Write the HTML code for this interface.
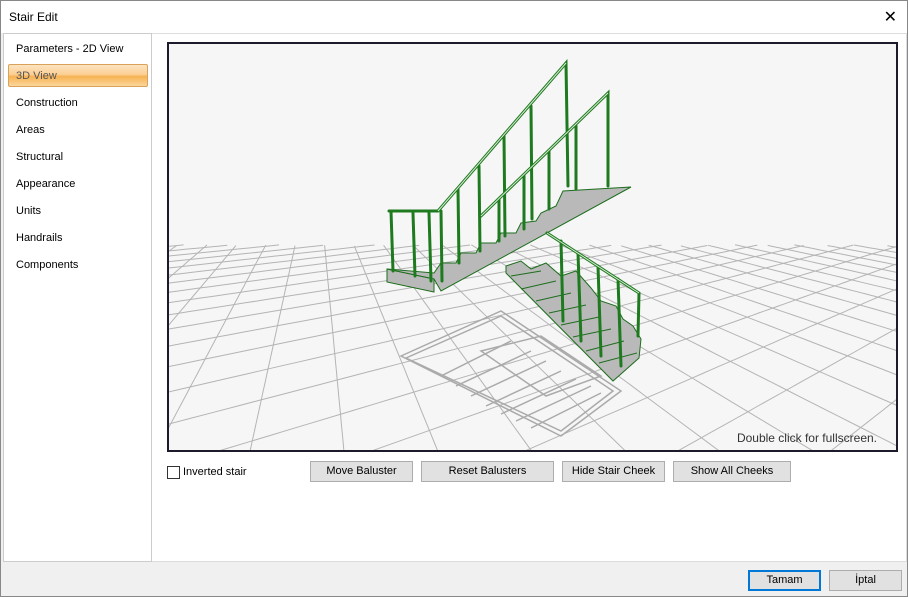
<!DOCTYPE html>
<html><head><meta charset="utf-8"><style>
*{margin:0;padding:0;box-sizing:border-box}
html,body{width:908px;height:597px;overflow:hidden}
body{background:#f0f0f0;font-family:"Liberation Sans",sans-serif;position:relative}
.win{position:absolute;left:0;top:0;width:908px;height:597px;border:1px solid #888;background:#f0f0f0;overflow:hidden}
.title{position:absolute;left:0;top:0;width:906px;height:32px;background:#fff;font-size:12px;color:#000;padding:9px 0 0 8px}
.close{position:absolute;right:10px;top:6px;font-size:16px}
.left{position:absolute;left:2px;top:32px;width:149px;height:529px;background:#fff;border:1px solid #ccc}
.item{position:absolute;left:12px;font-size:11px;color:#000}
.sel{position:absolute;left:4px;top:30px;width:140px;height:23px;border:1px solid #d9a25a;border-radius:2px;background:linear-gradient(#fde3c0 0%,#fbcf94 45%,#f7b253 55%,#fbd79c 100%)}
.main{position:absolute;left:151px;top:32px;width:755px;height:529px;background:#fff;border:1px solid #ddd;border-left:none}
.view{position:absolute;left:166px;top:41px;width:731px;height:410px;border:2px solid #1b1b2b;background:#f6f6f6;overflow:hidden}
.btn{position:absolute;top:460px;height:21px;background:#e1e1e1;border:1px solid #adadad;font-size:11px;text-align:center;line-height:19px;color:#000}
.cb{position:absolute;left:166px;top:465px;width:13px;height:13px;border:1px solid #333;background:#fff}
</style></head><body><div class="win">
<div class="title">Stair Edit<span class="close">✕</span></div>
<div class="left">
<div class="sel"></div>
<div class="item" style="top:9px">Parameters - 2D View</div>
<div class="item" style="top:36px;color:#555">3D View</div>
<div class="item" style="top:63px">Construction</div>
<div class="item" style="top:90px">Areas</div>
<div class="item" style="top:117px">Structural</div>
<div class="item" style="top:144px">Appearance</div>
<div class="item" style="top:171px">Units</div>
<div class="item" style="top:198px">Handrails</div>
<div class="item" style="top:225px">Components</div>
</div>
<div class="main"></div>
<div class="view">
<svg width="727" height="406" viewBox="168 43 727 406" style="position:absolute;left:0;top:0">
<g id="grid" stroke="#b4b4b4" stroke-width="1" fill="none"></g>
<g stroke="#aaa" stroke-width="1.5" fill="none">
<polygon points="400,355 500,310 620,390 560,435"/>
<polygon points="405,357 500,315 612,390 560,430"/>
<polygon points="480,350 540,335 600,375 545,395"/>
<path d="M440,375 L510,340 M455,385 L530,350 M470,395 L545,360 M485,405 L560,370 M500,413 L575,378 M515,420 L590,385 M530,427 L600,392"/>
</g>
<g stroke="#1e6e1e" stroke-width="1" fill="#b9b9b9">
<polygon points="386,268 433,278 433,291 386,281"/>
<polygon points="386,268 433,272 440,262 455,262 460,252 475,252 480,242 495,242 500,232 515,232 520,222 535,220 540,212 555,205 562,190 630,186 440,290 433,278"/>
<polygon points="505,265 520,260 530,268 545,262 560,275 575,270 590,287 600,300 615,305 622,318 632,325 640,338 638,357 612,380 505,272"/>
<path fill="none" d="M510,275 L540,270 M520,288 L555,280 M535,300 L570,292 M548,312 L585,304 M560,324 L598,316 M572,336 L610,328 M585,350 L623,340 M598,362 L636,352"/>
</g>
<g stroke="#1e7a1e" stroke-width="3" fill="none" stroke-linecap="round">
<path d="M437,210 L565,62 L567,185 M480,215 L607,92 L607,185 M388,210 L437,210 M546,232 L638,292 L637,335"/>
<path d="M390,210 L392,270 M412,212 L414,275 M428,212 L430,280 M457,188 L458,262 M478,165 L479,250 M503,135 L504,235 M530,105 L531,218 M440,210 L441,280 M498,198 L498,240 M523,175 L523,228 M548,150 L548,208 M575,125 L575,188 M560,240 L562,320 M577,252 L580,340 M597,265 L600,355 M617,278 L620,365"/>
</g>
<g stroke="#d6ecd6" stroke-width="1" fill="none"><path d="M437,210 L565,62 M480,215 L607,92 M546,232 L638,292"/></g>
<text x="876" y="441" font-family="Liberation Sans,sans-serif" font-size="12" fill="#333" text-anchor="end">Double click for fullscreen.</text>
</svg></div>
<div class="cb"></div>
<div style="position:absolute;left:182px;top:465px;font-size:11px">Inverted stair</div>
<div class="btn" style="left:309px;width:103px">Move Baluster</div>
<div class="btn" style="left:420px;width:133px">Reset Balusters</div>
<div class="btn" style="left:561px;width:103px">Hide Stair Cheek</div>
<div class="btn" style="left:672px;width:118px">Show All Cheeks</div>
<div class="btn" style="top:569px;left:747px;width:73px;border:2px solid #0078d7;line-height:17px">Tamam</div>
<div class="btn" style="top:569px;left:828px;width:73px">İptal</div>
</div>
<script>
(function(){var g=document.getElementById('grid'),s='';var cx=560,hy=150,f=400,H=3.75,a=0.55,c=Math.cos(a),sn=Math.sin(a),ZMAX=16;
function P(u,v){return [u*c-v*sn,u*sn+v*c];}
function seg(u1,v1,u2,v2){var N=200,pts=[];for(var i=0;i<=N;i++){var t=i/N,p=P(u1+(u2-u1)*t,v1+(v2-v1)*t);if(p[1]>0.5&&p[1]<=ZMAX)pts.push((cx+f*p[0]/p[1]).toFixed(1)+','+(hy+f*H/p[1]).toFixed(1));}
if(pts.length>1)s+='<polyline points="'+pts.join(' ')+'"/>';}
var R=25;for(var k=-R;k<=R;k++){seg(k+0.3,-R,k+0.3,R);seg(-R,k+0.5,R,k+0.5);}
g.innerHTML=s;})();
</script>
</body></html>
